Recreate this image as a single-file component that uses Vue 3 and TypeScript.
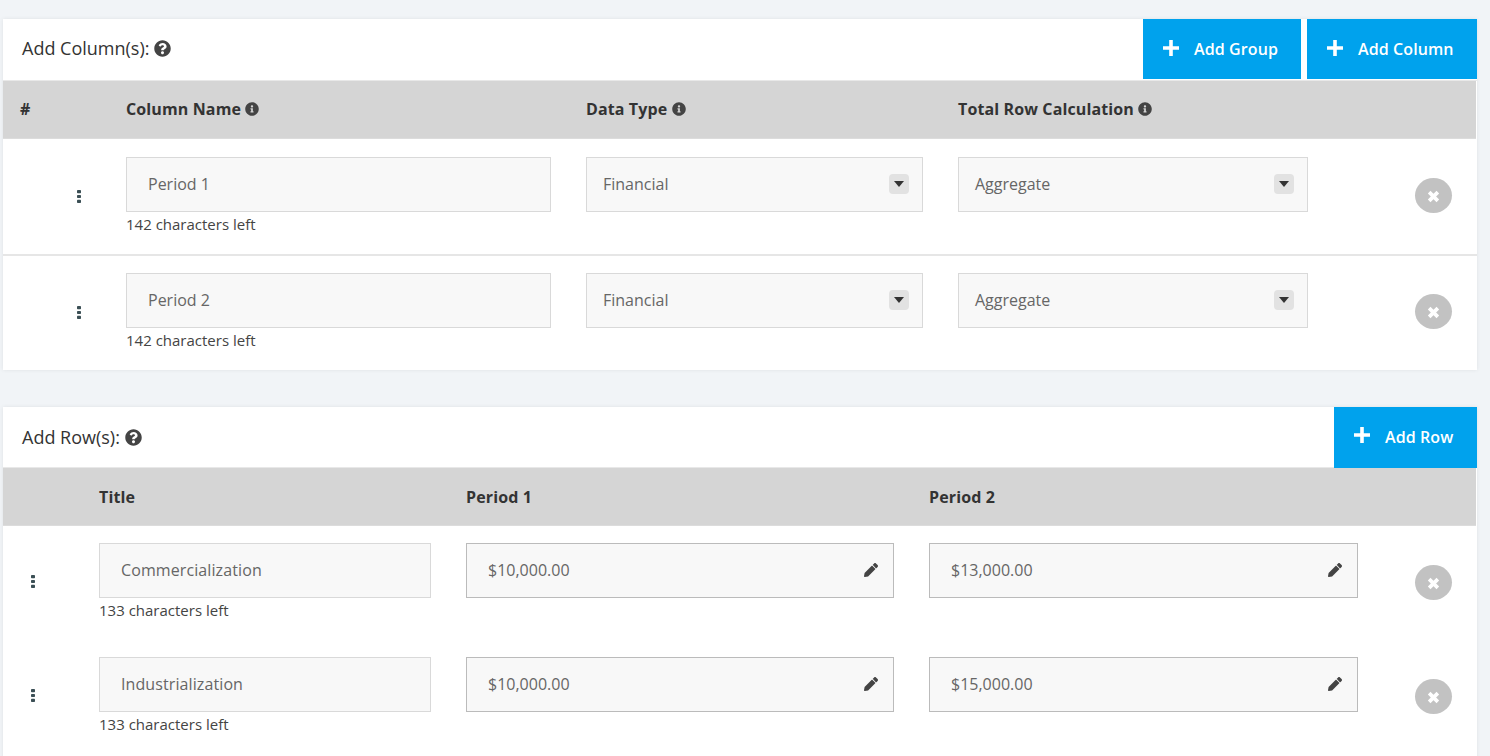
<script setup lang="ts">
const circleQ = "M504 256c0 136.997-111.043 248-248 248S8 392.997 8 256C8 119.083 119.043 8 256 8s248 111.083 248 248zM262.655 90c-54.497 0-89.255 22.957-116.549 63.758-3.536 5.286-2.353 12.415 2.715 16.258l34.699 26.31c5.205 3.947 12.621 3.008 16.665-2.122 17.864-22.658 30.113-35.797 57.303-35.797 20.429 0 45.698 13.148 45.698 32.958 0 14.976-12.363 22.667-32.534 33.976C247.128 238.528 216 254.941 216 296v4c0 6.627 5.373 12 12 12h56c6.627 0 12-5.373 12-12v-1.333c0-28.462 83.186-29.647 83.186-106.667 0-58.002-60.165-102-116.531-102zM256 338c-25.365 0-46 20.635-46 46 0 25.364 20.635 46 46 46s46-20.636 46-46c0-25.365-20.635-46-46-46z"
const circleI = "M256 8C119.043 8 8 119.083 8 256c0 136.997 111.043 248 248 248s248-111.003 248-248C504 119.083 392.957 8 256 8zm0 110c23.196 0 42 18.804 42 42s-18.804 42-42 42-42-18.804-42-42 18.804-42 42-42zm56 254c0 6.627-5.373 12-12 12h-88c-6.627 0-12-5.373-12-12v-24c0-6.627 5.373-12 12-12h12v-64h-12c-6.627 0-12-5.373-12-12v-24c0-6.627 5.373-12 12-12h64c6.627 0 12 5.373 12 12v100h12c6.627 0 12 5.373 12 12v24z"
const pencil = "M497.9 142.1l-46.1 46.1c-4.7 4.7-12.3 4.7-17 0l-111-111c-4.7-4.7-4.7-12.3 0-17l46.1-46.1c18.7-18.7 49.1-18.7 67.9 0l60.1 60.1c18.8 18.7 18.8 49.1 0 67.9zM284.2 99.8L21.6 362.4.4 483.9c-2.9 16.4 11.4 30.6 27.8 27.8l121.5-21.3 262.6-262.6c4.7-4.7 4.7-12.3 0-17l-111-111c-4.8-4.7-12.4-4.7-17.1 0z"

const columns = [
  { name: 'Period 1', left: '142 characters left' },
  { name: 'Period 2', left: '142 characters left' },
]
const rows = [
  { title: 'Commercialization', a: '$10,000.00', b: '$13,000.00' },
  { title: 'Industrialization', a: '$10,000.00', b: '$15,000.00' },
]
</script>

<template>
  <main class="page">
    <section class="card">
      <header class="card-head">
        <h2 class="card-title">Add Column(s):
          <svg class="help" viewBox="0 0 512 512"><path :d="circleQ" /></svg>
        </h2>
        <div class="actions">
          <button class="btn btn-group">
            <svg class="plus" viewBox="0 0 16 16"><path d="M6.2 0h3.6v6.2H16v3.6H9.8V16H6.2V9.8H0V6.2h6.2z" /></svg>Add Group
          </button>
          <button class="btn btn-col">
            <svg class="plus" viewBox="0 0 16 16"><path d="M6.2 0h3.6v6.2H16v3.6H9.8V16H6.2V9.8H0V6.2h6.2z" /></svg>Add Column
          </button>
        </div>
      </header>
      <div class="thead col-grid">
        <span class="hash">#</span>
        <span>Column Name <svg class="info" viewBox="0 0 512 512"><path :d="circleI" /></svg></span>
        <span>Data Type <svg class="info" viewBox="0 0 512 512"><path :d="circleI" /></svg></span>
        <span>Total Row Calculation <svg class="info" viewBox="0 0 512 512"><path :d="circleI" /></svg></span>
      </div>
      <div v-for="c in columns" :key="c.name" class="col-row col-grid">
        <div class="grip-col">
          <svg class="grip" viewBox="0 0 4 13"><rect y="0" width="4" height="3.2" rx="0.8" /><rect y="4.9" width="4" height="3.2" rx="0.8" /><rect y="9.8" width="4" height="3.2" rx="0.8" /></svg>
        </div>
        <div class="field-name">
          <div class="input text-input">{{ c.name }}</div>
          <div class="hint">{{ c.left }}</div>
        </div>
        <div class="input select type-select">Financial
          <span class="caret"><i></i></span>
        </div>
        <div class="last-cell">
          <div class="input select total-select">Aggregate
            <span class="caret"><i></i></span>
          </div>
          <button class="remove" aria-label="Remove">
            <svg viewBox="0 0 12 12"><path d="M2 2l8 8M10 2l-8 8" /></svg>
          </button>
        </div>
      </div>
    </section>

    <section class="card second">
      <header class="card-head row-head">
        <h2 class="card-title">Add Row(s):
          <svg class="help" viewBox="0 0 512 512"><path :d="circleQ" /></svg>
        </h2>
        <button class="btn btn-row">
          <svg class="plus" viewBox="0 0 16 16"><path d="M6.2 0h3.6v6.2H16v3.6H9.8V16H6.2V9.8H0V6.2h6.2z" /></svg>Add Row
        </button>
      </header>
      <div class="thead row-thead row-grid">
        <span></span>
        <span>Title</span>
        <span>Period 1</span>
        <span>Period 2</span>
      </div>
      <div v-for="r in rows" :key="r.title" class="data-row row-grid">
        <div class="grip-col row-grip">
          <svg class="grip" viewBox="0 0 4 13"><rect y="0" width="4" height="3.2" rx="0.8" /><rect y="4.9" width="4" height="3.2" rx="0.8" /><rect y="9.8" width="4" height="3.2" rx="0.8" /></svg>
        </div>
        <div class="field-title">
          <div class="input text-input">{{ r.title }}</div>
          <div class="hint">133 characters left</div>
        </div>
        <div class="input money first-money">{{ r.a }}
          <svg class="pencil" viewBox="0 0 512 512"><path :d="pencil" /></svg>
        </div>
        <div class="last-cell">
          <div class="input money second-money">{{ r.b }}
            <svg class="pencil" viewBox="0 0 512 512"><path :d="pencil" /></svg>
          </div>
          <button class="remove" aria-label="Remove">
            <svg viewBox="0 0 12 12"><path d="M2 2l8 8M10 2l-8 8" /></svg>
          </button>
        </div>
      </div>
    </section>
  </main>
</template>

<style scoped>
.page {
  height: 756px;
  box-sizing: border-box;
  overflow: hidden;
  padding: 19px 13px 0 3px;
  background: #f1f4f7;
  font-family: "Open Sans", "Liberation Sans", sans-serif;
  color: #333;
}
.card {
  background: #fff;
  box-shadow: 0 0 4px rgba(0, 0, 0, 0.08);
}
.second { margin-top: 37px; padding-bottom: 40px; }
.card-head {
  display: flex;
  justify-content: space-between;
  align-items: flex-start;
  height: 62px;
  box-sizing: border-box;
  border-bottom: 1px solid #e8e8e8;
}
.row-head { height: 61px; }
.card-title {
  margin: 0;
  padding: 16px 0 0 19px;
  font-size: 18px;
  font-weight: 400;
  line-height: 26px;
  color: #333;
}
.row-head .card-title { padding-top: 17px; }
.help { width: 17px; height: 17px; fill: #444; vertical-align: -2px; }
.actions { display: flex; gap: 6px; }
.btn {
  display: flex;
  align-items: center;
  justify-content: flex-start;
  height: 60px;
  border: 0;
  padding: 0 0 0 20px;
  background: #00a2ed;
  color: #fff;
  font: 600 16px "Open Sans", "Liberation Sans", sans-serif;
  letter-spacing: 0.1px;
}
.btn-group { width: 158px; }
.btn-col { width: 170px; }
.btn-row { width: 143px; height: 61px; padding-bottom: 2px; }
.plus { width: 16px; height: 16px; fill: #fff; margin-right: 15px; margin-top: -3px; }
.thead {
  height: 58px;
  box-sizing: border-box;
  align-items: center;
  margin-right: 1px;
  padding-bottom: 2px;
  background: #d5d5d5;
  border-bottom: 1px solid #dcdcdc;
  font-size: 16px;
  font-weight: 700;
  letter-spacing: 0.12px;
  color: #333;
}
.row-thead { padding-bottom: 0; }
.hash { padding-left: 17px; }
.info { width: 14px; height: 14px; fill: #444; vertical-align: -1px; }
.col-grid {
  display: grid;
  grid-template-columns: 123px 460px 372px 1fr;
}
.row-grid {
  display: grid;
  grid-template-columns: 96px 367px 463px 1fr;
}
.col-row {
  height: 115px;
  box-sizing: border-box;
  padding-top: 18px;
  align-items: start;
}
.col-row + .col-row {
  border-top: 2px solid #e6e6e6;
  height: 116px;
  padding-top: 17px;
}
.data-row {
  height: 114px;
  box-sizing: border-box;
  padding-top: 17px;
  align-items: start;
}
.grip-col { display: flex; justify-content: flex-end; padding: 33px 45px 0 0; }
.row-grip { justify-content: flex-start; padding: 32px 0 0 28px; }
.grip { width: 4px; height: 13px; fill: #3b4f55; display: block; }
.input {
  box-sizing: border-box;
  height: 55px;
  display: flex;
  align-items: center;
  padding-bottom: 2px;
  background: #f8f8f8;
  border: 1px solid #d9d9d9;
  font-size: 16px;
  color: #666;
}
.text-input { padding-left: 21px; }
.field-name .input { width: 425px; }
.field-title .input { width: 332px; letter-spacing: 0.1px; }
.hint { margin-top: 2px; font-size: 15px; line-height: 20px; color: #444; }
.select { justify-content: space-between; padding: 0 13px 2px 16px; }
.type-select { width: 337px; }
.total-select { width: 350px; }
.caret {
  width: 20px;
  height: 20px;
  border-radius: 4px;
  background: #e2e2e2;
  display: flex;
  align-items: center;
  justify-content: center;
}
.caret i {
  width: 0;
  height: 0;
  border-left: 5px solid transparent;
  border-right: 5px solid transparent;
  border-top: 6px solid #333;
}
.money {
  justify-content: space-between;
  padding: 0 15px 2px 21px;
  border-color: #bbb;
}
.first-money { width: 428px; }
.second-money { width: 429px; }
.pencil { width: 14px; height: 14px; fill: #444; }
.last-cell { display: flex; align-items: flex-start; }
.remove {
  width: 37px;
  height: 35px;
  margin-top: 21px;
  padding: 0;
  border: 0;
  border-radius: 50%;
  background: #c2c2c2;
  display: flex;
  align-items: center;
  justify-content: center;
}
.col-row .remove { margin-left: 107px; }
.data-row .remove { margin-left: 57px; margin-top: 22px; }
.remove svg { width: 13px; height: 13px; margin-top: 1px; fill: none; stroke: #fff; stroke-width: 3.4; }
</style>

<style>
html, body { margin: 0; background: #f1f4f7; overflow: hidden; }
</style>
